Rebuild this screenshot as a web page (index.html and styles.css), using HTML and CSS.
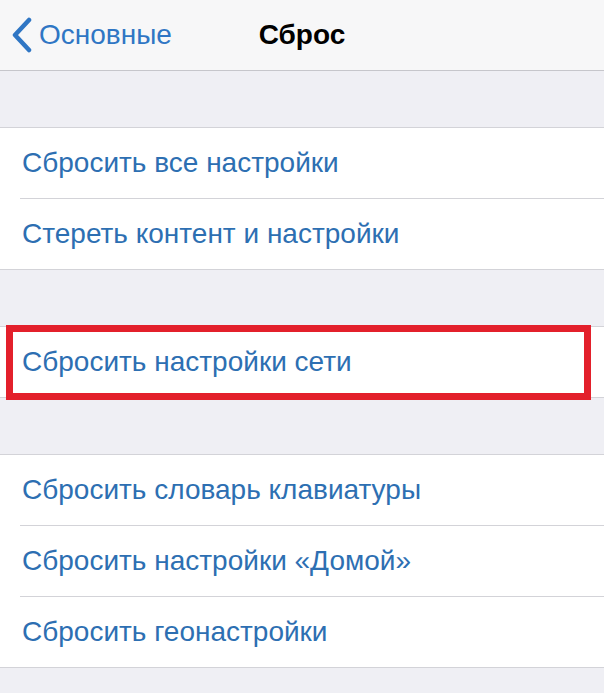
FILE: index.html
```html
<!DOCTYPE html>
<html lang="ru">
<head>
  <meta charset="UTF-8">
  <title>Сброс</title>
  <link rel="stylesheet" href="styles.css">
</head>
<body>
  <div class="navbar">
    <a class="back" href="#">
      <svg class="chevron" width="22" height="36" viewBox="0 0 22 36">
        <path d="M18 3 L4 18 L18 33" fill="none" stroke="currentColor" stroke-width="4.5" stroke-linecap="round" stroke-linejoin="round"/>
      </svg>
      <span>Основные</span>
    </a>
    <div class="title">Сброс</div>
    <div></div>
  </div>

  <div class="group">
    <div class="row">Сбросить все настройки</div>
    <div class="row">Стереть контент и настройки</div>
  </div>

  <div class="group">
    <div class="row highlighted">
      Сбросить настройки сети
      <div class="marker"></div>
    </div>
  </div>

  <div class="group">
    <div class="row">Сбросить словарь клавиатуры</div>
    <div class="row">Сбросить настройки «Домой»</div>
    <div class="row">Сбросить геонастройки</div>
  </div>
</body>
</html>
```

FILE: styles.css
```css
body {
  margin: 0;
  background-color: #efeff4;
  font-family: 'Liberation Sans', Arial, sans-serif;
  font-size: 28px;
  height: 693px;
  overflow: hidden;
}
.navbar {
  display: grid;
  grid-template-columns: 1fr auto 1fr;
  align-items: center;
  height: 70px;
  background-color: #f7f7f8;
  border-bottom: 1px solid #c6c6cb;
}
.back {
  display: flex;
  align-items: center;
  gap: 6px;
  padding-left: 11px;
  color: #2f76c4;
  text-decoration: none;
}
.chevron {
  display: block;
}
.title {
  font-weight: bold;
  color: #000;
}
.group {
  margin-top: 56px;
  background-color: #fff;
  border-top: 1px solid #d3d3d8;
  border-bottom: 1px solid #d3d3d8;
}
.row {
  position: relative;
  height: 70px;
  display: flex;
  align-items: center;
  padding-left: 22px;
  color: #2d6fb2;
}
.row + .row {
  border-top: 1px solid transparent;
}
.row + .row::before {
  content: '';
  position: absolute;
  left: 20px;
  right: 0;
  top: -1px;
  border-top: 1px solid #d3d3d8;
}
.marker {
  position: absolute;
  left: 6px;
  top: -2px;
  width: 585px;
  height: 75px;
  box-sizing: border-box;
  border: 7px solid #e3202b;
}
```
